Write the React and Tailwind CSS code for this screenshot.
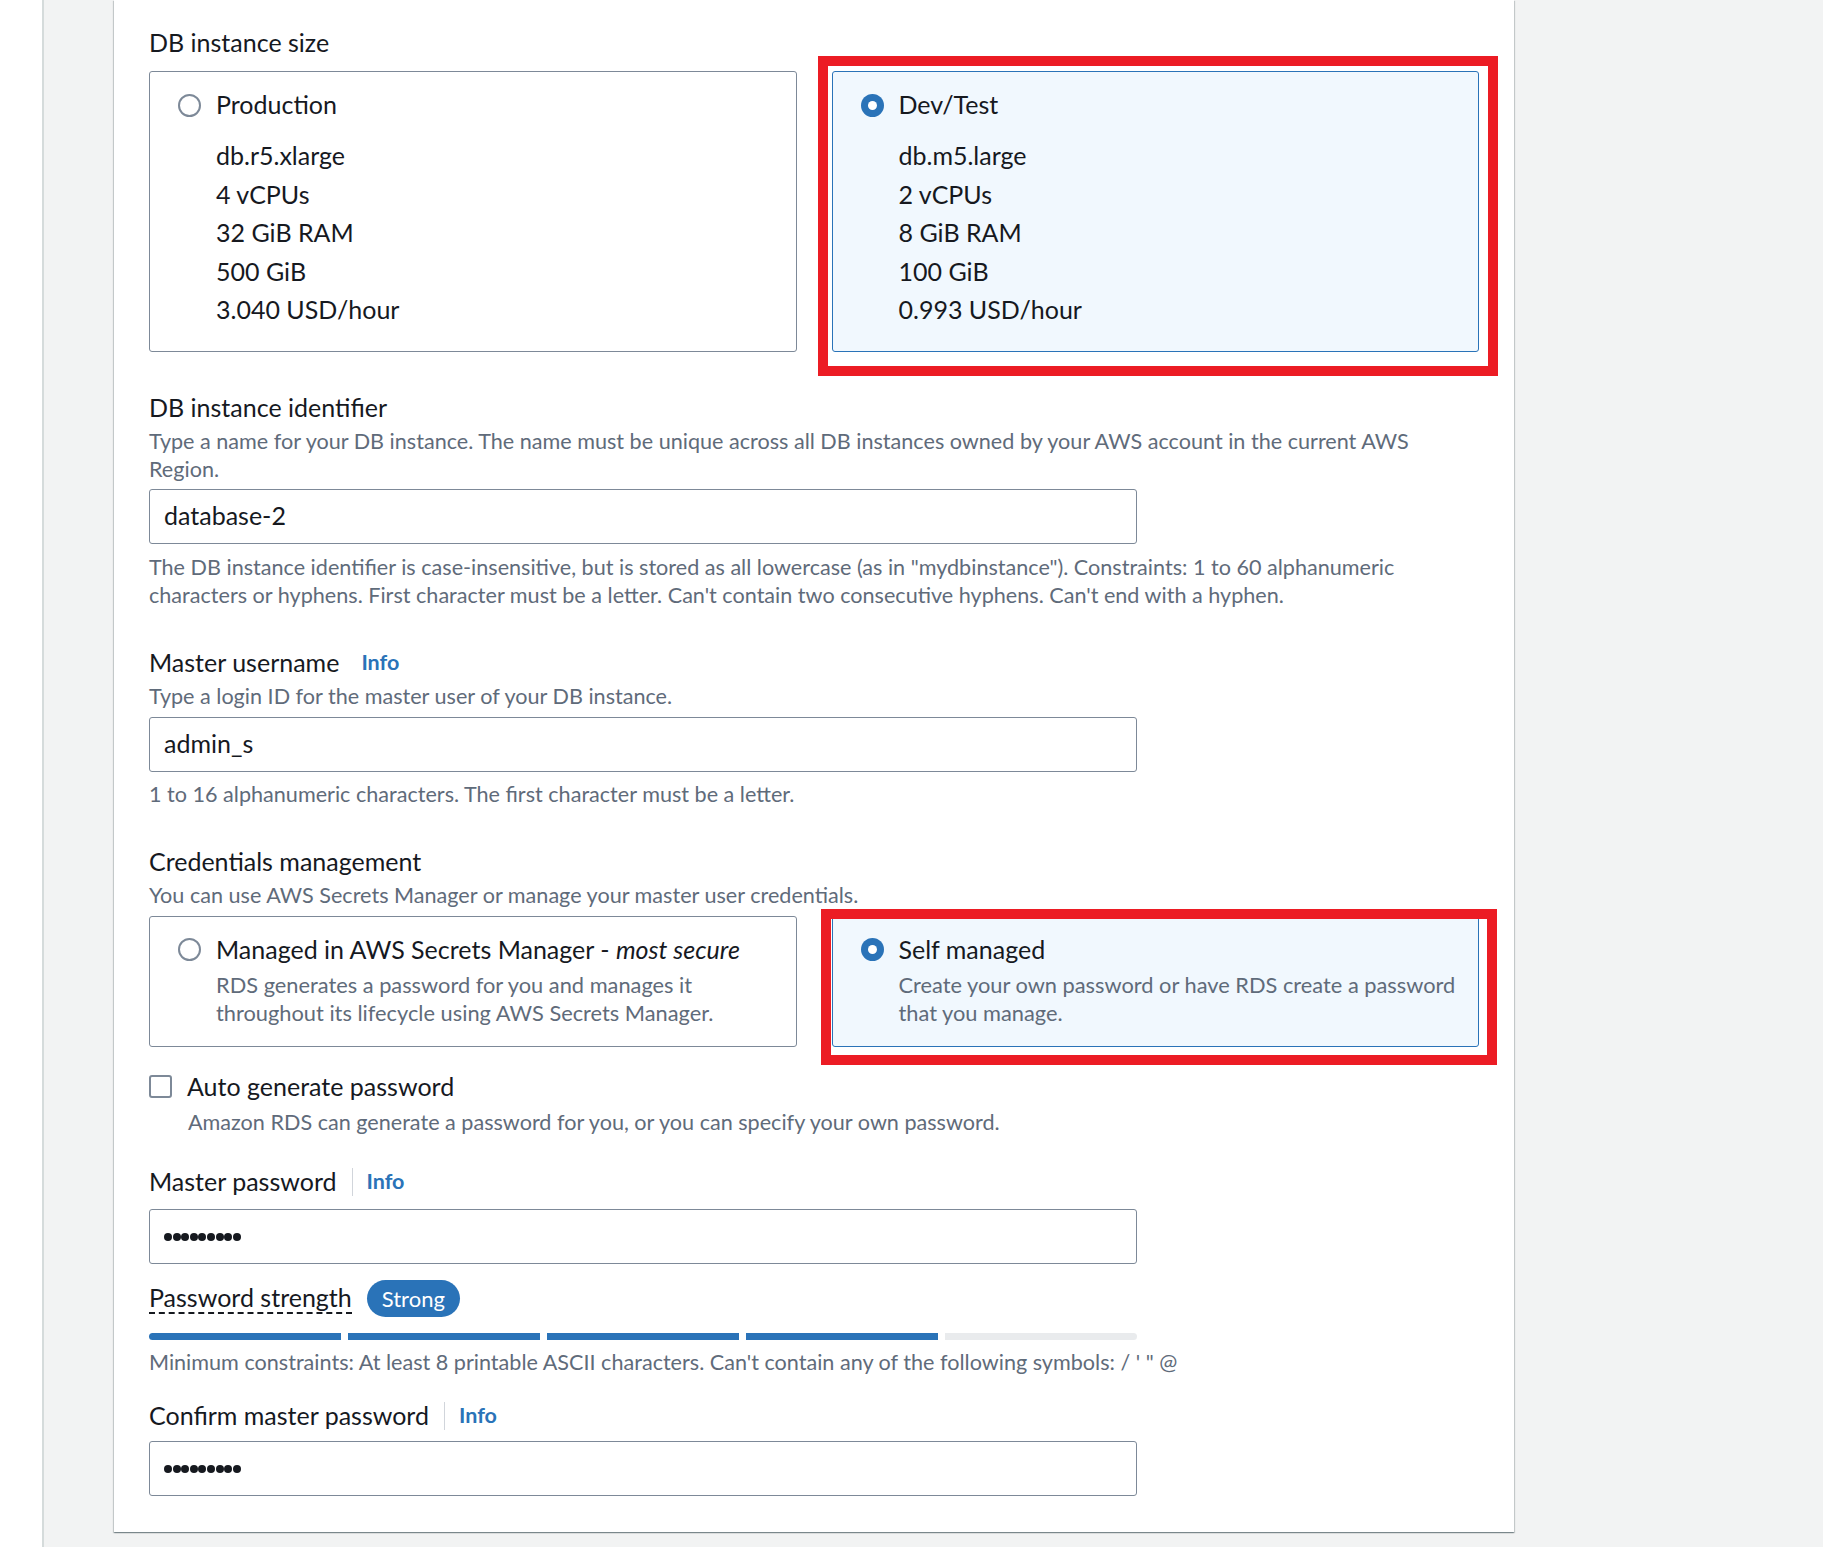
import React from 'react';

const BLUE = '#2a73b8';

// radio dot, selected or not
const Radio = ({ checked }) => (
  <svg width="23" height="23" viewBox="0 0 23 23" className="shrink-0">
    {checked ? (
      <>
        <circle cx="11.5" cy="11.5" r="11.5" fill={BLUE} />
        <circle cx="11.5" cy="11.5" r="4.5" fill="#fff" />
      </>
    ) : (
      <circle cx="11.5" cy="11.5" r="10.5" fill="#fff" stroke="#7d8998" strokeWidth="2" />
    )}
  </svg>
);

const SizeCard = ({ title, lines, checked }) => (
  <div
    className={
      'min-w-0 flex-1 rounded-[3px] border px-[28px] pt-[14px] pb-[22px] ' +
      (checked ? 'border-[#2a73b8] bg-[#f1f8fe]' : 'border-[#7d8998] bg-white')
    }
  >
    <div className="flex h-[38px] items-center gap-[15px]">
      <Radio checked={checked} />
      <span className="text-[25px] text-[#16191f]">{title}</span>
    </div>
    <div className="mt-[12px] pl-[38px]">
      {lines.map((l) => (
        <div key={l} className="text-[25px] leading-[38.5px] text-[#16191f]">
          {l}
        </div>
      ))}
    </div>
  </div>
);

const CredCard = ({ title, desc, checked }) => (
  <div
    className={
      'min-w-0 flex-1 rounded-[3px] border px-[28px] pt-[14px] pb-[19px] ' +
      (checked ? 'border-[#2a73b8] bg-[#f1f8fe]' : 'border-[#7d8998] bg-white')
    }
  >
    <div className="flex h-[38px] items-center gap-[15px]">
      <Radio checked={checked} />
      <span className="whitespace-nowrap text-[25px] text-[#16191f]">{title}</span>
    </div>
    <div className="mt-[2px] whitespace-nowrap pl-[38px] text-[21.8px] leading-[28px] text-[#5f6b7a]">{desc}</div>
  </div>
);

const Label = ({ children, info, divider, className = '' }) => (
  <div className={'flex h-[38px] items-center ' + className}>
    <span className="text-[25px] text-[#16191f]">{children}</span>
    {info && divider && <span className="ml-[15px] h-[28px] w-px bg-[#d1d5db]" />}
    {info && (
      <span className={'text-[21.5px] font-bold text-[#2a73b8] ' + (divider ? 'ml-[14px]' : 'ml-[22px]')}>
        Info
      </span>
    )}
  </div>
);

const Hint = ({ children, className = '' }) => (
  <div className={'whitespace-nowrap text-[21.6px] leading-[28px] text-[#5f6b7a] ' + className}>{children}</div>
);

const Dots = () => (
  <div className="mt-[2px] flex gap-[0.6px]">
    {[0, 1, 2, 3, 4, 5, 6, 7, 8].map((i) => (
      <span key={i} className="h-[8px] w-[8px] rounded-full bg-[#16191f]" />
    ))}
  </div>
);

const Field = ({ value, secret, className = '' }) => (
  <div
    className={
      'flex h-[55px] w-[988px] items-center rounded-[3px] border border-[#7d8998] bg-white pl-[14px] ' + className
    }
  >
    {secret ? <Dots /> : <span className="text-[25px] text-[#16191f]">{value}</span>}
  </div>
);

export default function App() {
  return (
    <div className="flex h-[1547px] w-full bg-[#f2f3f3] font-['Lato','Open_Sans',sans-serif]">
      <div className="w-[44px] shrink-0 border-r-2 border-[#d5dbdb] bg-white" />
      <div className="flex-1 pl-[70px]">
        <div className="relative h-[1532px] w-[1400px] bg-white px-[35px] pt-[24px] shadow-[0_1px_1px_0_rgba(0,28,36,0.3),1px_1px_1px_0_rgba(0,28,36,0.15),-1px_1px_1px_0_rgba(0,28,36,0.15)]">
          <Label>DB instance size</Label>
          <div className="mt-[9px] flex gap-[35px]">
            <SizeCard
              title="Production"
              lines={['db.r5.xlarge', '4 vCPUs', '32 GiB RAM', '500 GiB', '3.040 USD/hour']}
            />
            <SizeCard
              checked
              title="Dev/Test"
              lines={['db.m5.large', '2 vCPUs', '8 GiB RAM', '100 GiB', '0.993 USD/hour']}
            />
          </div>

          <Label className="mt-[37px]">DB instance identifier</Label>
          <Hint>
            Type a name for your DB instance. The name must be unique across all DB instances owned by your AWS
            account in the current AWS
            <br />
            Region.
          </Hint>
          <Field className="mt-[6px]" value="database-2" />
          <Hint className="mt-[9px]">
            The DB instance identifier is case-insensitive, but is stored as all lowercase (as in "mydbinstance").
            Constraints: 1 to 60 alphanumeric
            <br />
            characters or hyphens. First character must be a letter. Can't contain two consecutive hyphens. Can't end
            with a hyphen.
          </Hint>

          <Label className="mt-[35px]" info>
            Master username
          </Label>
          <Hint>Type a login ID for the master user of your DB instance.</Hint>
          <Field className="mt-[7px]" value="admin_s" />
          <Hint className="mt-[8px]">1 to 16 alphanumeric characters. The first character must be a letter.</Hint>

          <Label className="mt-[35px]">Credentials management</Label>
          <Hint>You can use AWS Secrets Manager or manage your master user credentials.</Hint>
          <div className="mt-[7px] flex gap-[35px]">
            <CredCard
              title={
                <>
                  Managed in AWS Secrets Manager - <i>most secure</i>
                </>
              }
              desc={
                <>
                  RDS generates a password for you and manages it
                  <br />
                  throughout its lifecycle using AWS Secrets Manager.
                </>
              }
            />
            <CredCard
              checked
              title="Self managed"
              desc={
                <>
                  Create your own password or have RDS create a password
                  <br />
                  that you manage.
                </>
              }
            />
          </div>

          <div className="mt-[21px] flex h-[38px] items-center gap-[15px]">
            <span className="h-[23px] w-[23px] rounded-[3px] border-2 border-[#7d8998] bg-white" />
            <span className="text-[25px] text-[#16191f]">Auto generate password</span>
          </div>
          <Hint className="mt-[2px] pl-[39px]">
            Amazon RDS can generate a password for you, or you can specify your own password.
          </Hint>

          <Label className="mt-[27px]" info divider>
            Master password
          </Label>
          <Field className="mt-[8px]" secret />

          <div className="mt-[16px] flex h-[37px] items-center gap-[15px]">
            <span className="border-b-2 border-dashed border-[#16191f] text-[25px] leading-[30px] text-[#16191f]">
              Password strength
            </span>
            <span className="flex h-[37px] items-center rounded-full bg-[#2a73b8] px-[15px] text-[22px] text-white">
              Strong
            </span>
          </div>
          <div className="mt-[16px] flex w-[988px] gap-[7px]">
            <div className="h-[7px] flex-1 rounded-l-full bg-[#2a73b8]" />
            <div className="h-[7px] flex-1 bg-[#2a73b8]" />
            <div className="h-[7px] flex-1 bg-[#2a73b8]" />
            <div className="h-[7px] flex-1 bg-[#2a73b8]" />
            <div className="h-[7px] flex-1 rounded-r-full bg-[#e9ebed]" />
          </div>
          <Hint className="mt-[8px]">
            Minimum constraints: At least 8 printable ASCII characters. Can't contain any of the following symbols: /
            ' " @
          </Hint>

          <Label className="mt-[21px]" info divider>
            Confirm master password
          </Label>
          <Field className="mt-[6px]" secret />

          {/* red annotation frames */}
          <div className="pointer-events-none absolute left-[704px] top-[56px] h-[320px] w-[680px] border-[10px] border-[#ec1c24]" />
          <div className="pointer-events-none absolute left-[707px] top-[909px] h-[156px] w-[676px] border-[10px] border-[#ec1c24]" />
        </div>
      </div>
    </div>
  );
}
